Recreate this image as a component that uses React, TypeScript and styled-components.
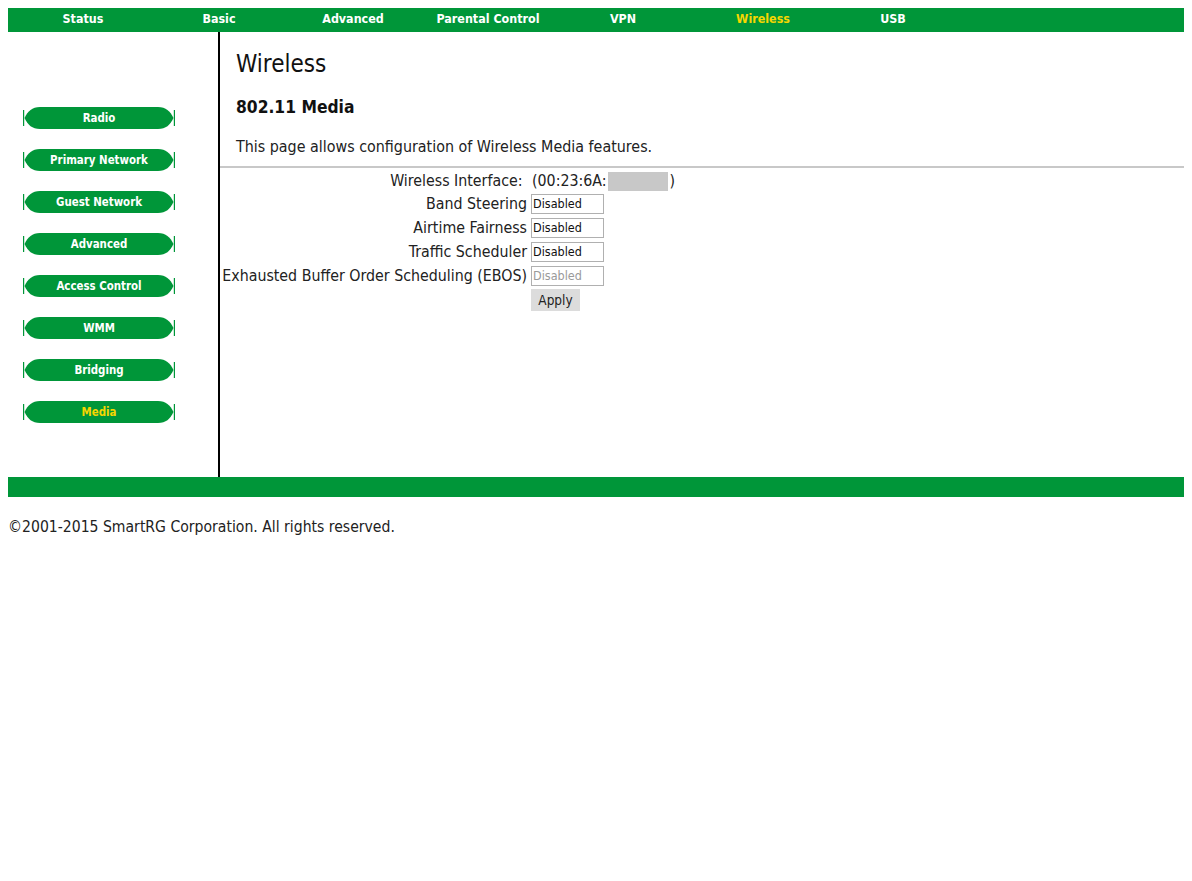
import React from "react";
import styled, { createGlobalStyle } from "styled-components";

const GREEN = "#009639";
const YELLOW = "#f7d600";

const Global = createGlobalStyle`
  html, body { margin: 0; padding: 0; background: #fff; }
  body { margin: 8px; font-family: "DejaVu Sans Condensed", "DejaVu Sans", sans-serif; color: #222; }
`;

const NavBar = styled.div`
  display: flex;
  height: 24px;
  background: ${GREEN};
  align-items: flex-start;
`;

const NavItem = styled.div<{ $w: number; $active?: boolean }>`
  width: ${(p) => p.$w}px;
  text-align: center;
  font-weight: bold;
  font-size: 12.4px;
  line-height: 21px;
  color: ${(p) => (p.$active ? YELLOW : "#fff")};
`;

const Main = styled.div`
  display: flex;
  height: 445px;
`;

const Sidebar = styled.div`
  width: 212px;
  border-right: 2px solid #000;
  display: flex;
  flex-direction: column;
  gap: 20px;
  padding: 75px 0 0 15px;
  box-sizing: border-box;
`;

const SideButton = styled.div<{ $active?: boolean }>`
  position: relative;
  width: 152px;
  height: 22px;
  display: flex;
  align-items: center;
  justify-content: center;
  font-weight: bold;
  font-size: 11.4px;
  color: ${(p) => (p.$active ? YELLOW : "#fff")};
  span { position: relative; }
`;

const ButtonShape = styled.svg`
  position: absolute;
  inset: 0;
`;

const Content = styled.div`
  flex: 1;
  display: flex;
  flex-direction: column;
`;

const Title = styled.h1`
  margin: 19px 0 0 16px;
  font-size: 24px;
  font-weight: normal;
  line-height: 26px;
  color: #111;
`;

const SubTitle = styled.h2`
  margin: 19px 0 0 16px;
  font-size: 17.3px;
  font-weight: bold;
  line-height: 22px;
  color: #111;
`;

const Desc = styled.p`
  margin: 19px 0 0 16px;
  font-size: 15.9px;
  line-height: 20px;
`;

const Rule = styled.div`
  margin: 9px -3px 0 0;
  height: 2px;
  background: #c8c8c8;
`;

const Form = styled.div`
  display: grid;
  grid-template-columns: 307px auto;
  column-gap: 4px;
  row-gap: 4px;
  justify-content: start;
  align-items: center;
  margin-top: 4px;
  font-size: 15.8px;
`;

const Label = styled.div`
  text-align: right;
  line-height: 20px;
  white-space: nowrap;
`;

const InterfaceLabel = styled(Label)`
  line-height: 18px;
`;

const Value = styled.div`
  display: flex;
  align-items: center;
  line-height: 18px;
  height: 18px;
  padding-left: 1px;
`;

const Masked = styled.span`
  display: inline-block;
  width: 60px;
  height: 19px;
  background: #c8c8c8;
  margin: 0 2px 0 1px;
`;

const Field = styled.div<{ $disabled?: boolean }>`
  width: 73px;
  height: 20px;
  box-sizing: border-box;
  border: 1px solid #b0b0b0;
  font-size: 12.5px;
  line-height: 18px;
  padding-left: 1px;
  color: ${(p) => (p.$disabled ? "#9a9a9a" : "#111")};
`;

const ApplyButton = styled.button`
  width: 49px;
  height: 22px;
  border: none;
  background: #dcdcdc;
  font-family: inherit;
  font-size: 13.5px;
  color: #222;
  padding: 0;
  margin-top: -1px;
`;

const FooterBar = styled.div`
  height: 20px;
  background: ${GREEN};
`;

const Copyright = styled.p`
  margin: 20px 0 0 0;
  font-size: 15.6px;
  line-height: 20px;
`;

const navItems: [string, number, boolean?][] = [
  ["Status", 150],
  ["Basic", 122],
  ["Advanced", 146],
  ["Parental Control", 124],
  ["VPN", 146],
  ["Wireless", 134, true],
  ["USB", 126],
];

const sideItems = [
  "Radio",
  "Primary Network",
  "Guest Network",
  "Advanced",
  "Access Control",
  "WMM",
  "Bridging",
  "Media",
];

function Shape() {
  return (
    <ButtonShape width="152" height="22" viewBox="0 0 152 22">
      <path
        d="M1.5 11 C5 4 9 0 17 0 H135 C143 0 147 4 150.5 11 C147 18 143 22 135 22 H17 C9 22 5 18 1.5 11 Z"
        fill={GREEN}
      />
      <rect x="0" y="3" width="1.2" height="16" fill={GREEN} />
      <rect x="150.8" y="3" width="1.2" height="16" fill={GREEN} />
    </ButtonShape>
  );
}

const rows: [string, boolean?][] = [
  ["Band Steering"],
  ["Airtime Fairness"],
  ["Traffic Scheduler"],
  ["Exhausted Buffer Order Scheduling (EBOS)", true],
];

export default function App() {
  return (
    <>
      <Global />
      <NavBar>
        {navItems.map(([t, w, a]) => (
          <NavItem key={t} $w={w} $active={a}>
            {t}
          </NavItem>
        ))}
      </NavBar>
      <Main>
        <Sidebar>
          {sideItems.map((s) => (
            <SideButton key={s} $active={s === "Media"}>
              <Shape />
              <span>{s}</span>
            </SideButton>
          ))}
        </Sidebar>
        <Content>
          <Title>Wireless</Title>
          <SubTitle>802.11 Media</SubTitle>
          <Desc>This page allows configuration of Wireless Media features.</Desc>
          <Rule />
          <Form>
            <InterfaceLabel>Wireless Interface:&nbsp;</InterfaceLabel>
            <Value>
              (00:23:6A:<Masked />)
            </Value>
            {rows.map(([l, d]) => (
              <React.Fragment key={l}>
                <Label>{l}</Label>
                <Field $disabled={d}>Disabled</Field>
              </React.Fragment>
            ))}
            <span />
            <div>
              <ApplyButton>Apply</ApplyButton>
            </div>
          </Form>
        </Content>
      </Main>
      <FooterBar />
      <Copyright>©2001-2015 SmartRG Corporation. All rights reserved.</Copyright>
    </>
  );
}
